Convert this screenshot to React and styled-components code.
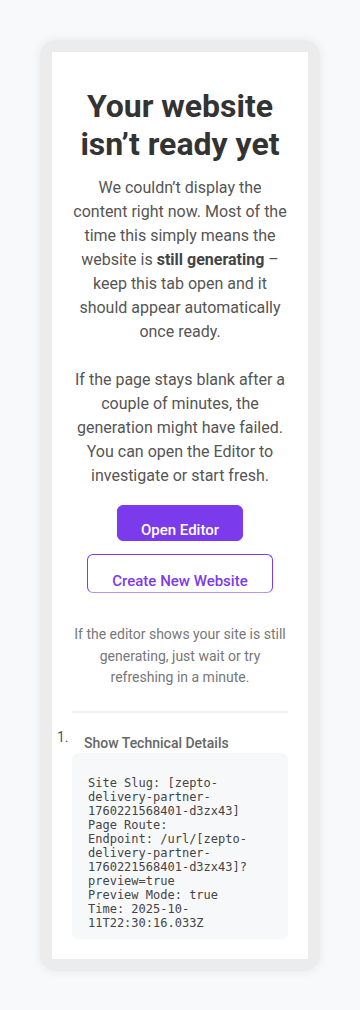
import React from "react";
import styled, { createGlobalStyle } from "styled-components";

const Global = createGlobalStyle`
  html, body { margin: 0; padding: 0; background: #f8f9fb; }
  body { font-family: Roboto, "Liberation Sans", sans-serif; }
  * { box-sizing: border-box; }
`;

const Page = styled.div`
  padding: 40px;
  display: flex;
  justify-content: center;
`;

const Frame = styled.div`
  width: 280px;
  padding: 12px;
  border-radius: 16px;
  background: #ececec;
  box-shadow: 0 0 8px 2px rgba(0, 0, 0, 0.05);
`;

const Card = styled.div`
  background: #ffffff;
  padding: 35px 20px 20px;
  display: flex;
  flex-direction: column;
  align-items: stretch;
  text-align: center;
`;

const Title = styled.h1`
  margin: 0;
  font-size: 32px;
  line-height: 38px;
  font-weight: 700;
  color: #333333;
`;

const Para = styled.p`
  margin: ${(p) => p.$top}px 0 0;
  font-size: 16px;
  line-height: 24px;
  color: #555555;
  strong { font-weight: 700; color: #444; }
`;

const Actions = styled.div`
  margin-top: 17px;
  display: flex;
  flex-direction: column;
  align-items: center;
  gap: 13px;
`;

const Button = styled.a`
  display: inline-flex;
  justify-content: center;
  align-items: flex-end;
  height: ${(p) => (p.$outline ? 39 : 36)}px;
  padding: 0 ${(p) => (p.$outline ? 24 : 23)}px ${(p) => (p.$outline ? 1 : 0)}px;
  border-radius: 6px;
  font-size: 15px;
  line-height: 20px;
  font-weight: 500;
  text-decoration: none;
  background: ${(p) => (p.$outline ? "#ffffff" : "#7c3aed")};
  color: ${(p) => (p.$outline ? "#7c3aed" : "#ffffff")};
  border: 1px solid #7c3aed;
  ${(p) => p.$outline && "border-bottom-color: #b794f4;"}
`;

const Note = styled.p`
  margin: 31px 0 0;
  font-size: 14px;
  line-height: 21.5px;
  color: #777777;
`;

const Divider = styled.hr`
  margin: 22px 0 0;
  border: 0;
  border-top: 2px solid #f0f0f0;
  height: 0;
`;

const DetailsRow = styled.div`
  margin-top: 20px;
  display: flex;
  align-items: flex-start;
  text-align: left;
`;

const Marker = styled.span`
  margin-left: -15px;
  width: 27px;
  flex: none;
  font-size: 14px;
  line-height: 20px;
  margin-top: -6px;
  color: #555555;
`;

const Summary = styled.span`
  font-size: 14px;
  line-height: 20px;
  font-weight: 500;
  color: #666666;
`;

const Pre = styled.pre`
  margin: 0;
  padding: 23px 16px 9px;
  background: #f7f8fa;
  border-radius: 6px;
  text-align: left;
  font-family: "DejaVu Sans Mono", "Liberation Mono", monospace;
  font-size: 12px;
  line-height: 14px;
  color: #444444;
  white-space: pre-wrap;
  word-break: normal;
`;

const details = `Site Slug: [zepto-delivery-partner-1760221568401-d3zx43]
Page Route:
Endpoint: /url/[zepto-delivery-partner-1760221568401-d3zx43]?preview=true
Preview Mode: true
Time: 2025-10-11T22:30:16.033Z`;

export default function App() {
  return (
    <>
      <Global />
      <Page>
        <Frame>
          <Card>
            <Title>Your website isn’t ready yet</Title>
            <Para $top={13}>
              We couldn’t display the content right now. Most of the time this
              simply means the website is <strong>still generating</strong> –
              keep this tab open and it should appear automatically once ready.
            </Para>
            <Para $top={24}>
              If the page stays blank after a couple of minutes, the generation
              might have failed. You can open the Editor to investigate or start
              fresh.
            </Para>
            <Actions>
              <Button href="#">Open Editor</Button>
              <Button href="#" $outline>
                Create New Website
              </Button>
            </Actions>
            <Note>
              If the editor shows your site is still generating, just wait or
              try refreshing in a minute.
            </Note>
            <Divider />
            <DetailsRow>
              <Marker>1.</Marker>
              <Summary>Show Technical Details</Summary>
            </DetailsRow>
            <Pre>{details}</Pre>
          </Card>
        </Frame>
      </Page>
    </>
  );
}
